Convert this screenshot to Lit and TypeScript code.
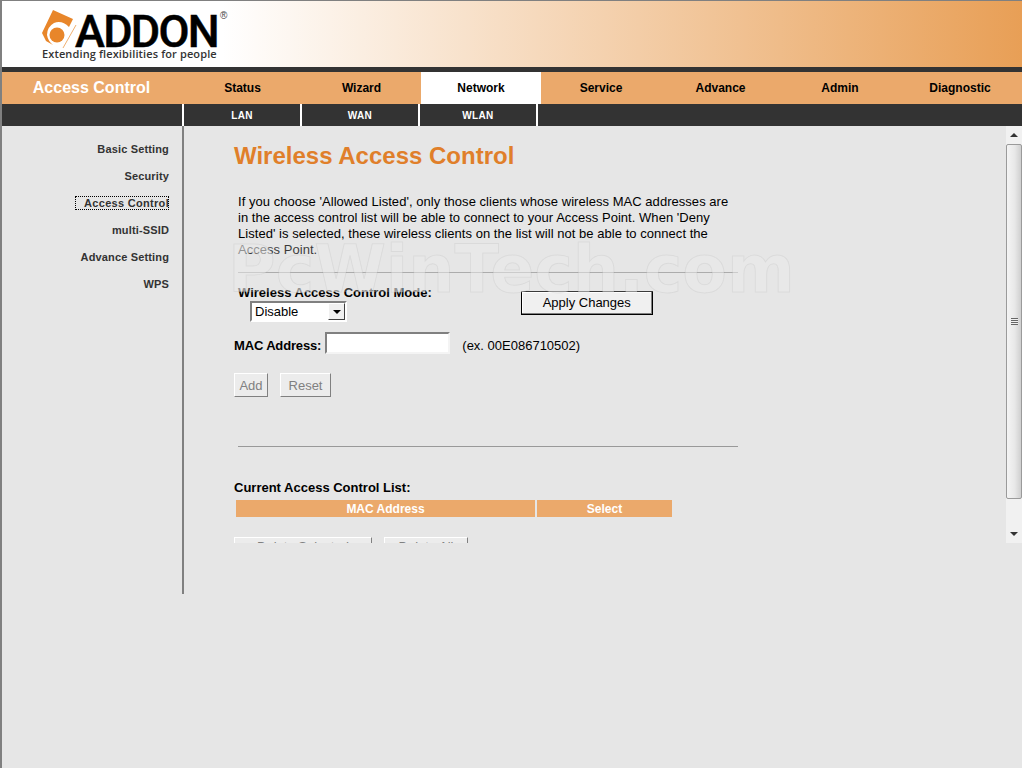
import { LitElement, html, css } from "lit";
import { customElement } from "lit/decorators.js";

const TABS = [
  { label: "Status", w: 119 },
  { label: "Wizard", w: 119 },
  { label: "Network", w: 120, active: true },
  { label: "Service", w: 120 },
  { label: "Advance", w: 119 },
  { label: "Admin", w: 120 },
  { label: "Diagnostic", w: 120 },
];
const SUBTABS = ["LAN", "WAN", "WLAN"];
const SIDE = ["Basic Setting", "Security", "Access Control", "multi-SSID", "Advance Setting", "WPS"];

@customElement("app-root")
export class AppRoot extends LitElement {
  static styles = css`
    :host {
      display: block;
      position: relative;
      width: 1022px;
      height: 768px;
      overflow: hidden;
      box-sizing: border-box;
      border-top: 1px solid #808080;
      border-left: 2px solid #808080;
      background: #e6e6e6;
      font-family: "Liberation Sans", Arial, sans-serif;
      color: #000;
    }
    .banner {
      position: relative;
      height: 66px;
      background: linear-gradient(90deg, #fff 0, #fff 220px, #e89f56 100%);
    }
    .logo-mark {
      position: absolute;
      left: 40px;
      top: 9px;
    }
    .logo-word {
      position: absolute;
      left: 73px;
      top: 7px;
      font-family: Roboto, sans-serif;
      font-weight: 500;
      font-size: 45px;
      line-height: 48px;
      letter-spacing: -1.7px;
      -webkit-text-stroke: 0.5px #000;
      color: #000;
    }
    .logo-reg {
      position: absolute;
      left: 218px;
      top: 9px;
      font-size: 10px;
      color: #444;
    }
    .logo-tag {
      position: absolute;
      left: 40px;
      top: 46px;
      font-family: "Open Sans", sans-serif;
      font-weight: 600;
      font-size: 11px;
      line-height: 14px;
      letter-spacing: 0.12px;
      color: #333;
    }
    .band {
      height: 5px;
      background: #333;
    }
    .nav {
      display: flex;
      height: 32px;
      background: #eba96b;
    }
    .nav-title {
      box-sizing: border-box;
      width: 181px;
      padding-right: 2px;
      text-align: center;
      color: #fff;
      font-weight: bold;
      font-size: 16px;
      line-height: 32px;
    }
    .tab {
      text-align: center;
      font-weight: bold;
      font-size: 12px;
      line-height: 32px;
      color: #000;
    }
    .tab.active {
      background: #fff;
    }
    .subnav {
      display: flex;
      height: 22px;
      padding-left: 180px;
      background: #333;
    }
    .subtab {
      width: 116px;
      border-left: 2px solid #fff;
      text-align: center;
      color: #fff;
      font-weight: bold;
      font-size: 10px;
      line-height: 23px;
      letter-spacing: 0.35px;
    }
    .subtab.end {
      width: 0;
    }
    .body {
      display: flex;
      align-items: flex-start;
    }
    .side {
      box-sizing: border-box;
      width: 182px;
      height: 468px;
      padding: 16px 13px 0 0;
      border-right: 2px solid #808080;
      display: flex;
      flex-direction: column;
      align-items: flex-end;
      gap: 13px;
    }
    .side a {
      font-weight: bold;
      font-size: 11px;
      line-height: 14px;
      letter-spacing: 0.15px;
      color: #333;
    }
    .side a.focus {
      box-sizing: border-box;
      width: 94px;
      text-align: right;
      letter-spacing: 0.3px;
      outline: 1px dotted #000;
      outline-offset: -1px;
    }
    .frame {
      flex: 1;
      display: flex;
      height: 417px;
      overflow: hidden;
    }
    .page {
      flex: 1;
      overflow: hidden;
      padding: 16px 0 0 50px;
    }
    h1 {
      margin: 0;
      font-size: 24px;
      line-height: 28px;
      font-weight: bold;
      color: #e07f2a;
    }
    .intro {
      width: 500px;
      margin: 24px 0 0 4px;
      font-size: 13px;
      line-height: 16px;
      letter-spacing: 0.04px;
      white-space: nowrap;
    }
    hr {
      width: 500px;
      height: 1px;
      border: 0;
      margin: 14px 0 0 4px;
      background: #999;
    }
    .mode-row {
      display: flex;
      margin: 12px 0 0 4px;
    }
    .mode-label {
      font-size: 13px;
      font-weight: bold;
      line-height: 16px;
    }
    .fake-select {
      box-sizing: border-box;
      display: flex;
      align-items: center;
      justify-content: space-between;
      width: 97px;
      height: 21px;
      margin-left: 12px;
      padding: 0 0 0 3px;
      background: #fff;
      border: 2px solid;
      border-color: #808080 #fff #fff #808080;
      font-size: 13px;
    }
    .fake-select b {
      display: flex;
      align-items: center;
      justify-content: center;
      width: 17px;
      height: 17px;
      box-sizing: border-box;
      background: #f0f0f0;
      border: 1px solid;
      border-color: #fff #404040 #404040 #fff;
    }
    .fake-select b::after {
      content: "";
      border: 4px solid transparent;
      border-top: 4px solid #000;
      border-bottom: 0;
    }
    .apply {
      box-sizing: border-box;
      width: 132px;
      height: 24px;
      margin: 6px 0 0 89px;
      background: #f0f0f0;
      border: 1px solid #000;
      box-shadow: inset -1px -1px 0 #808080, inset 1px 1px 0 #fff;
      font: 13px "Liberation Sans", Arial, sans-serif;
      color: #000;
      padding: 0 0 2px;
    }
    .mac-row {
      display: flex;
      align-items: center;
      margin-top: 10px;
      font-size: 13px;
    }
    .mac-row strong,
    .mac-row span {
      padding-top: 4px;
    }
    .mac-row strong {
      margin-right: 4px;
      letter-spacing: -0.15px;
    }
    .mac-input {
      box-sizing: border-box;
      width: 125px;
      height: 22px;
      background: #fff;
      border: 2px solid;
      border-color: #808080 #f4f4f4 #f4f4f4 #808080;
      margin-right: 12px;
    }
    .actions {
      display: flex;
      gap: 12px;
      margin-top: 19px;
    }
    .btn {
      box-sizing: border-box;
      height: 24px;
      padding: 0;
      background: #ececec;
      border: 1px solid;
      border-color: #fff #808080 #808080 #fff;
      font: 13px "Liberation Sans", Arial, sans-serif;
      color: #808080;
    }
    .add { width: 34px; }
    .reset { width: 51px; }
    .gap-hr {
      margin-top: 49px;
    }
    .list-title {
      margin: 33px 0 0;
      font-size: 13px;
      font-weight: bold;
      line-height: 16px;
    }
    .list-head {
      display: flex;
      gap: 2px;
      margin: 4px 0 0 2px;
    }
    .list-head div {
      height: 17px;
      line-height: 18px;
      background: #eba96b;
      color: #fff;
      font-size: 12px;
      font-weight: bold;
      text-align: center;
    }
    .col-mac { width: 299px; }
    .col-sel { width: 135px; }
    .del-row {
      margin-top: 20px;
    }
    .del-row .btn {
      padding-bottom: 5px;
    }
    .del-1 { width: 138px; }
    .del-2 { width: 84px; }
    .scrollbar {
      flex: none;
      width: 16px;
      display: flex;
      flex-direction: column;
      background: #f1f1f1;
    }
    .arrow {
      height: 18px;
      display: flex;
      align-items: center;
      justify-content: center;
    }
    .arrow i {
      border: 4px solid transparent;
    }
    .arrow.up i {
      border-top: 0;
      border-bottom: 4px solid #333;
    }
    .arrow.down i {
      border-bottom: 0;
      border-top: 4px solid #333;
    }
    .thumb {
      box-sizing: border-box;
      height: 355px;
      border: 1px solid #9a9a9a;
      border-radius: 2px;
      background: linear-gradient(90deg, #f4f4f4, #e8e8e8 55%, #cfcfcf);
      display: flex;
      align-items: center;
      justify-content: center;
    }
    .thumb span {
      width: 7px;
      height: 7px;
      background: repeating-linear-gradient(180deg, #666 0 1px, #f0f0f0 1px 2px);
    }
    .track {
      flex: 1;
    }
    .watermark {
      position: absolute;
      left: 226px;
      top: 242px;
      height: 49px;
      background: rgba(230, 230, 230, 0.25);
      font-family: "DejaVu Sans", sans-serif;
      font-weight: bold;
      font-size: 65px;
      line-height: 54px;
      color: rgba(233, 233, 233, 0.5);
      -webkit-text-stroke: 1px rgba(0, 0, 0, 0.05);
      pointer-events: none;
      white-space: nowrap;
    }
  `;

  render() {
    return html`
      <div class="banner">
        <svg class="logo-mark" width="36" height="40" viewBox="0 0 36 40">
          <path d="M11 0 L31 9 L27 17 Q20 10 12 13 Q5 17 5 25 Q6 31 11 35 L4 31 L0 23 Z" fill="#e8862a"/>
          <circle cx="15" cy="25" r="7.5" fill="#e8862a"/>
          <path d="M34 15 L21 38" stroke="#f0b070" stroke-width="1" fill="none"/>
        </svg>
        <div class="logo-word">ADDON</div>
        <div class="logo-reg">®</div>
        <div class="logo-tag">Extending flexibilities for people</div>
      </div>
      <div class="band"></div>
      <div class="nav">
        <div class="nav-title">Access Control</div>
        ${TABS.map(
          (t) => html`<div class="tab ${t.active ? "active" : ""}" style="width:${t.w}px">${t.label}</div>`
        )}
      </div>
      <div class="subnav">
        ${SUBTABS.map((s) => html`<div class="subtab">${s}</div>`)}
        <div class="subtab end"></div>
      </div>
      <div class="body">
        <nav class="side">
          ${SIDE.map((s) => html`<a class=${s === "Access Control" ? "focus" : ""}>${s}</a>`)}
        </nav>
        <div class="frame">
          <div class="page">
            <h1>Wireless Access Control</h1>
            <p class="intro">
              If you choose 'Allowed Listed', only those clients whose wireless MAC addresses are<br />
              in the access control list will be able to connect to your Access Point. When 'Deny<br />
              Listed' is selected, these wireless clients on the list will not be able to connect the<br />
              Access Point.
            </p>
            <hr />
            <div class="mode-row">
              <div>
                <div class="mode-label">Wireless Access Control Mode:</div>
                <div class="fake-select">Disable<b></b></div>
              </div>
              <button class="apply">Apply Changes</button>
            </div>
            <div class="mac-row">
              <strong>MAC Address:</strong>
              <div class="mac-input"></div>
              <span>(ex. 00E086710502)</span>
            </div>
            <div class="actions">
              <button class="btn add">Add</button>
              <button class="btn reset">Reset</button>
            </div>
            <hr class="gap-hr" />
            <div class="list-title">Current Access Control List:</div>
            <div class="list-head">
              <div class="col-mac">MAC Address</div>
              <div class="col-sel">Select</div>
            </div>
            <div class="actions del-row">
              <button class="btn del-1">Delete Selected</button>
              <button class="btn del-2">Delete All</button>
            </div>
          </div>
          <div class="scrollbar">
            <div class="arrow up"><i></i></div>
            <div class="thumb"><span></span></div>
            <div class="track"></div>
            <div class="arrow down"><i></i></div>
          </div>
        </div>
      </div>
      <div class="watermark">PcWinTech.com</div>
    `;
  }
}
